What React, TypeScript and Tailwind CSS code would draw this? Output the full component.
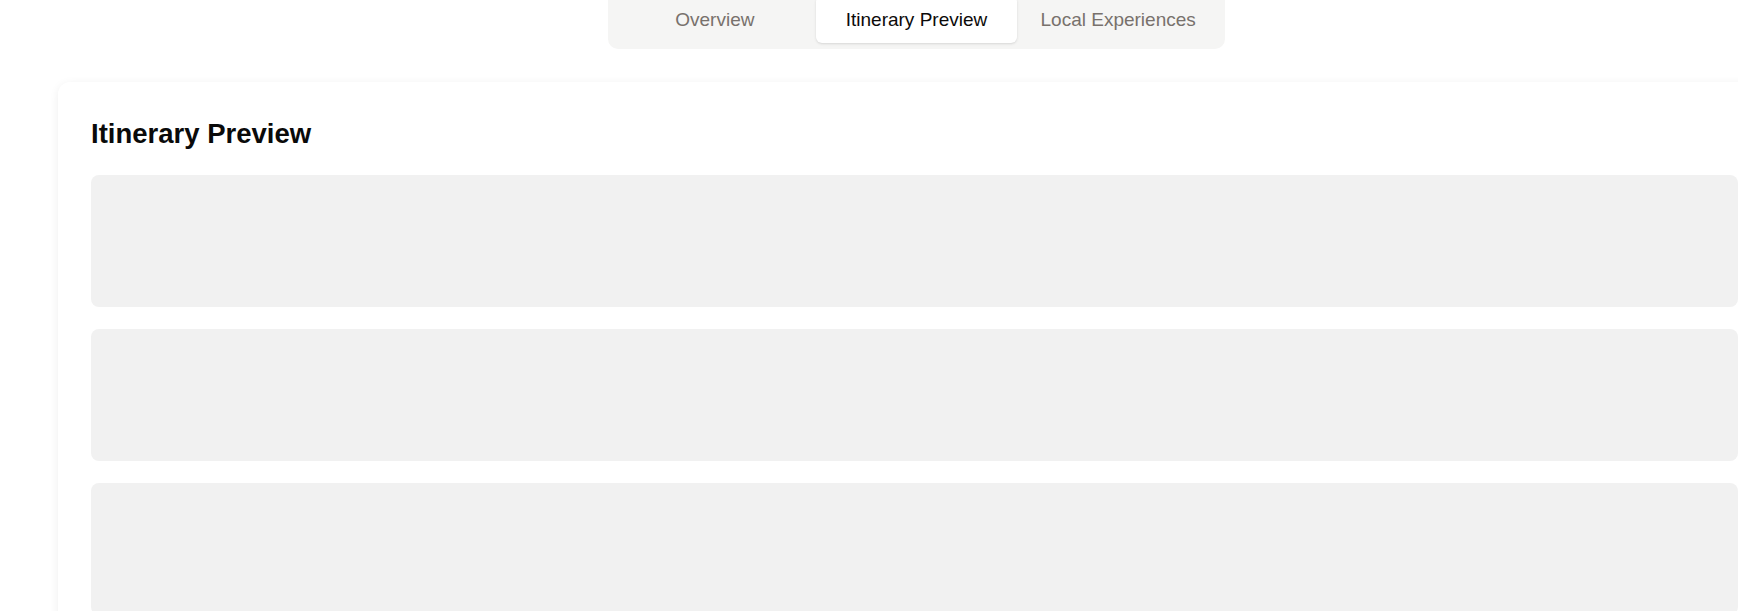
const tabs = ["Overview", "Itinerary Preview", "Local Experiences"];

export default function App() {
  const active = "Itinerary Preview";

  return (
    <div className="min-h-screen overflow-hidden bg-white font-['Liberation_Sans',Arial,sans-serif]">
      <div className="w-[1833px] px-[58px]">
        <div className="mx-auto -mt-[10px] grid w-[617px] grid-cols-3 rounded-[10px] bg-[#f5f5f4] p-1.5">
          {tabs.map((tab) => (
            <button
              key={tab}
              type="button"
              className={
                tab === active
                  ? "flex h-[47px] items-center justify-center rounded-md bg-white pt-[2px] text-[19px] text-[#0c0a09] shadow-sm"
                  : "flex h-[47px] items-center justify-center rounded-md pt-[2px] text-[19px] text-[#78716c]"
              }
            >
              {tab}
            </button>
          ))}
        </div>

        <div className="mt-[33px] w-[1713px] rounded-xl bg-white px-[33px] pt-[34px] pb-10 shadow-[0_2px_10px_rgba(0,0,0,0.07)]">
          <h2 className="mb-[23px] text-[27.5px] leading-9 font-bold text-[#0a0a0a]">
            Itinerary Preview
          </h2>
          <div className="flex flex-col gap-[22px]">
            <div className="h-[132px] rounded-lg bg-[#f1f1f1]" />
            <div className="h-[132px] rounded-lg bg-[#f1f1f1]" />
            <div className="h-[132px] rounded-lg bg-[#f1f1f1]" />
            <div className="h-[132px] rounded-lg bg-[#f1f1f1]" />
          </div>
        </div>
      </div>
    </div>
  );
}
